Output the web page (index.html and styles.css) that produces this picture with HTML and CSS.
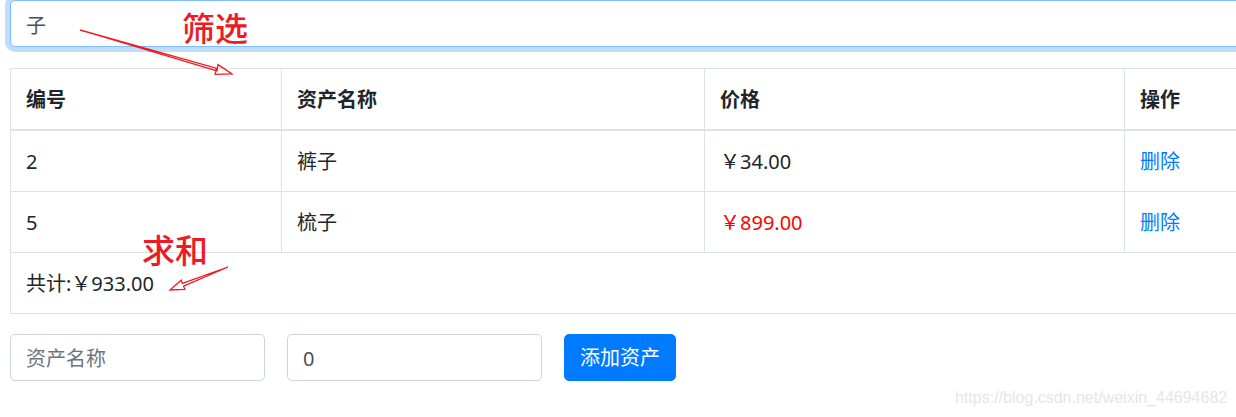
FILE: index.html
```html
<!DOCTYPE html>
<html lang="zh-CN">
<head>
<meta charset="utf-8">
<title>资产管理</title>
<link rel="stylesheet" href="styles.css">
</head>
<body>
<div class="page">
  <div class="container">
    <input class="form-control search" type="text" value="子">

    <table class="table">
      <colgroup>
        <col class="c1"><col class="c2"><col class="c3"><col class="c4">
      </colgroup>
      <thead>
        <tr><th>编号</th><th>资产名称</th><th>价格</th><th>操作</th></tr>
      </thead>
      <tbody>
        <tr><td>2</td><td>裤子</td><td>￥34.00</td><td><a class="link" href="#">删除</a></td></tr>
        <tr><td>5</td><td>梳子</td><td class="red">￥899.00</td><td><a class="link" href="#">删除</a></td></tr>
        <tr><td colspan="4">共计:￥933.00</td></tr>
      </tbody>
    </table>

    <div class="add-form">
      <input class="form-control small" type="text" placeholder="资产名称">
      <input class="form-control small" type="text" value="0">
      <button class="btn" type="button">添加资产</button>
    </div>
  </div>

  <div class="note note-filter">筛选</div>
  <div class="note note-sum">求和</div>
  <svg class="arrows" width="1236" height="417" viewBox="0 0 1236 417" xmlns="http://www.w3.org/2000/svg">
    <polygon points="80,30 216.2,68.1 215.2,74.3 232,74 218,64.7 217,70.9" fill="none" stroke="#ed1c24" stroke-width="1.3" stroke-linejoin="miter"/>
    <polygon points="228,267 182.4,283.4 181.2,280.2 170,290 184.8,289.5 183.6,286.2" fill="none" stroke="#ed1c24" stroke-width="1.3" stroke-linejoin="miter"/>
  </svg>
  <div class="watermark">https://blog.csdn.net/weixin_44694682</div>
</div>
</body>
</html>
```

FILE: styles.css
```css
html, body {
  margin: 0;
  padding: 0;
  overflow: hidden;
  background: #fff;
}

body {
  font-family: "Noto Sans", "Noto Sans CJK SC", sans-serif;
  font-size: 20px;
  line-height: 30px;
  color: #212529;
}

.page {
  position: relative;
  width: 1236px;
  height: 417px;
  overflow: hidden;
}

.container {
  padding-left: 10px;
  width: 1400px;
}

.form-control {
  display: block;
  box-sizing: border-box;
  height: 47px;
  padding: 8px 15px 7px;
  font-family: inherit;
  font-size: 20px;
  line-height: 30px;
  color: #495057;
  background: #fff;
  border: 1px solid #ced4da;
  border-radius: 5px;
  outline: none;
}

.form-control::placeholder {
  color: #6c757d;
}

.search {
  width: 1320px;
  border-color: #80bdff;
  box-shadow: 0 0 0 5px rgba(0, 123, 255, 0.25);
}

.table {
  margin-top: 21px;
  width: 1330px;
  border-collapse: collapse;
  table-layout: fixed;
}

.c1 { width: 271px; }
.c2 { width: 423px; }
.c3 { width: 420px; }

.table th,
.table td {
  border: 1px solid #dee2e6;
  padding: 16px 15px 14px;
  text-align: left;
  vertical-align: top;
  line-height: 30px;
  height: 30px;
}

.table th {
  font-weight: 700;
  border-bottom-width: 2px;
}

.red {
  color: #ff0000;
}

.link {
  color: #007bff;
  text-decoration: none;
}

.add-form {
  display: flex;
  gap: 22px;
  margin-top: 20px;
}

.small {
  width: 255px;
}

.btn {
  box-sizing: border-box;
  height: 47px;
  padding: 8px 15px 7px;
  font-family: inherit;
  font-size: 20px;
  line-height: 30px;
  color: #fff;
  background: #007bff;
  border: 1px solid #007bff;
  border-radius: 5px;
}

.note {
  position: absolute;
  color: #ed1c24;
  font-family: "Noto Sans CJK SC", sans-serif;
  font-weight: 500;
  font-size: 33px;
  line-height: 1;
}

.note-filter {
  left: 182px;
  top: 11px;
}

.note-sum {
  left: 142px;
  top: 233px;
}

.arrows {
  position: absolute;
  left: 0;
  top: 0;
  pointer-events: none;
}

.watermark {
  position: absolute;
  left: 955px;
  top: 388px;
  font-family: "Liberation Sans", Arial, sans-serif;
  font-size: 16px;
  line-height: 20px;
  color: #e6e6e6;
  white-space: nowrap;
}
```
